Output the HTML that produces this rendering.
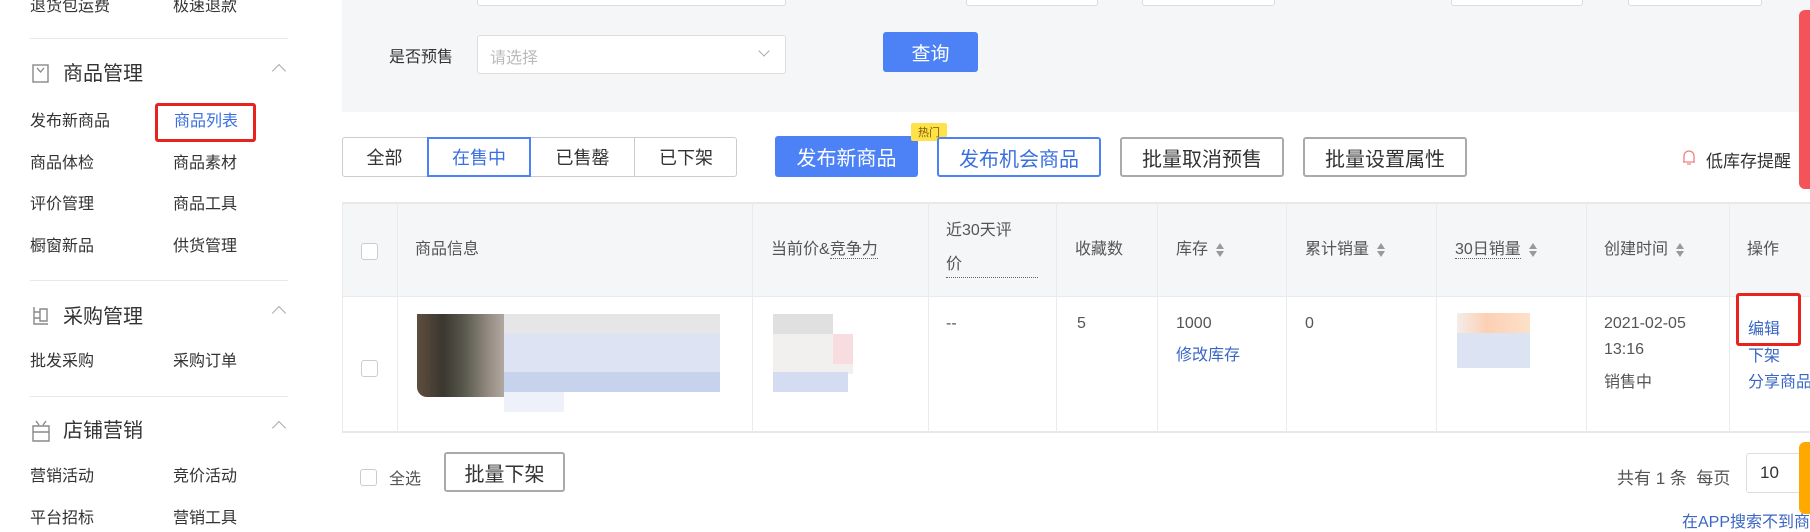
<!DOCTYPE html>
<html><head><meta charset="utf-8"><style>
*{margin:0;padding:0;box-sizing:border-box}
body{width:1810px;height:524px;overflow:hidden;background:#fff;position:relative;font-family:"Liberation Sans","Noto Sans CJK SC",sans-serif;color:#333;font-size:16px}
.a{position:absolute;white-space:nowrap}
.side{color:#333;font-size:16px;line-height:20px}
.hd{font-size:20px;line-height:24px;color:#333}
.dv{position:absolute;left:30px;width:258px;height:1px;background:#e8e8e8}
.caret{position:absolute;width:10px;height:10px;border-left:1.5px solid #aaa;border-top:1.5px solid #aaa;transform:rotate(45deg)}
.btn{position:absolute;border:1px solid #aaa;border-radius:3px;font-size:18px;display:flex;align-items:center;justify-content:center;color:#333;background:#fff}
.vl{position:absolute;top:202px;height:230px;width:1px;background:#ebebeb}
.th{position:absolute;color:#555;font-size:16px;line-height:20px;white-space:nowrap}
.sort{display:inline-block;vertical-align:middle;margin-left:8px;width:8px;height:16px;position:relative}
.sort:before{content:"";position:absolute;left:0;top:1px;border:4px solid transparent;border-bottom:6px solid #999;border-top:0}
.sort:after{content:"";position:absolute;left:0;bottom:1px;border:4px solid transparent;border-top:6px solid #999;border-bottom:0}
.cb{position:absolute;width:17px;height:17px;border:1px solid #ccc;border-radius:3px;background:#fff}
.blue{color:#3a66c4}
</style></head><body>
<div class="a side" style="left:30px;top:-3px">退货包运费</div>
<div class="a side" style="left:173px;top:-3px">极速退款</div>
<div class="dv" style="top:38px"></div>
<svg class="a" style="left:32px;top:64px" width="18" height="20" viewBox="0 0 18 20"><rect x="1" y="1" width="15" height="17" fill="none" stroke="#888" stroke-width="1.4"/><path d="M5 4l3.5 4 3.5-4" fill="none" stroke="#888" stroke-width="1.3"/></svg>
<div class="a hd" style="left:63px;top:62px">商品管理</div>
<div class="caret" style="left:274px;top:66px"></div>
<div class="a side" style="left:30px;top:112px">发布新商品</div>
<div class="a side" style="left:174px;top:112px;color:#3a6fe0">商品列表</div>
<div class="a" style="left:155px;top:103px;width:101px;height:39px;border:3px solid #e8221f;border-radius:3px"></div>
<div class="a side" style="left:30px;top:154px">商品体检</div><div class="a side" style="left:173px;top:154px">商品素材</div>
<div class="a side" style="left:30px;top:195px">评价管理</div><div class="a side" style="left:173px;top:195px">商品工具</div>
<div class="a side" style="left:30px;top:237px">橱窗新品</div><div class="a side" style="left:173px;top:237px">供货管理</div>
<div class="dv" style="top:280px"></div>
<svg class="a" style="left:32px;top:306px" width="18" height="20" viewBox="0 0 18 20"><path d="M2 1v17h14M2 6h6M2 12h6M8 3h7v12H8z" fill="none" stroke="#888" stroke-width="1.4"/></svg>
<div class="a hd" style="left:63px;top:305px">采购管理</div>
<div class="caret" style="left:274px;top:308px"></div>
<div class="a side" style="left:30px;top:352px">批发采购</div><div class="a side" style="left:173px;top:352px">采购订单</div>
<div class="dv" style="top:396px"></div>
<svg class="a" style="left:31px;top:420px" width="20" height="22" viewBox="0 0 20 22"><path d="M5 1l3 4M15 1l-3 4M2 6h16v15H2zM2 12h16" fill="none" stroke="#888" stroke-width="1.4"/></svg>
<div class="a hd" style="left:63px;top:419px">店铺营销</div>
<div class="caret" style="left:274px;top:423px"></div>
<div class="a side" style="left:30px;top:467px">营销活动</div><div class="a side" style="left:173px;top:467px">竞价活动</div>
<div class="a side" style="left:30px;top:509px">平台招标</div><div class="a side" style="left:173px;top:509px">营销工具</div>

<div class="a" style="left:342px;top:0;width:1468px;height:112px;background:#f5f6f8"></div>
<div class="a" style="left:477px;top:-10px;width:309px;height:16px;border:1px solid #ddd;border-radius:3px;background:#fff"></div>
<div class="a" style="left:966px;top:-10px;width:132px;height:16px;border:1px solid #ddd;border-radius:3px;background:#fff"></div>
<div class="a" style="left:1142px;top:-10px;width:133px;height:16px;border:1px solid #ddd;border-radius:3px;background:#fff"></div>
<div class="a" style="left:1451px;top:-10px;width:132px;height:16px;border:1px solid #ddd;border-radius:3px;background:#fff"></div>
<div class="a" style="left:1628px;top:-10px;width:134px;height:16px;border:1px solid #ddd;border-radius:3px;background:#fff"></div>
<div class="a" style="left:389px;top:43px;color:#333">是否预售</div>
<div class="a" style="left:477px;top:35px;width:309px;height:39px;border:1px solid #ddd;border-radius:3px;background:#fff"></div>
<div class="a" style="left:490px;top:44px;color:#bbb">请选择</div>
<div class="a" style="left:760px;top:47px;width:8px;height:8px;border-right:1.3px solid #aaa;border-bottom:1.3px solid #aaa;transform:rotate(45deg)"></div>
<div class="a" style="left:883px;top:32px;width:95px;height:40px;background:#4d82f7;border-radius:3px;color:#fff;font-size:19px;display:flex;align-items:center;justify-content:center">查询</div>
<div class="a" style="left:1799px;top:10px;width:11px;height:179px;background:#f5535a;border-radius:6px 0 0 6px"></div>

<div class="a" style="left:342px;top:137px;width:395px;height:40px;border:1px solid #ccc;border-radius:3px"></div>
<div class="a" style="left:342px;top:137px;width:85px;height:40px;display:flex;align-items:center;justify-content:center;font-size:18px">全部</div>
<div class="a" style="left:427px;top:137px;width:104px;height:40px;border:2px solid #4d82f7;display:flex;align-items:center;justify-content:center;font-size:18px;color:#3a6fe0;background:#fff">在售中</div>
<div class="a" style="left:531px;top:137px;width:104px;height:40px;border-right:1px solid #ccc;display:flex;align-items:center;justify-content:center;font-size:18px">已售罄</div>
<div class="a" style="left:635px;top:137px;width:102px;height:40px;display:flex;align-items:center;justify-content:center;font-size:18px">已下架</div>
<div class="a" style="left:775px;top:136px;width:143px;height:41px;background:#4d82f7;border-radius:3px;color:#fff;font-size:20px;display:flex;align-items:center;justify-content:center">发布新商品</div>
<div class="a" style="left:911px;top:123px;width:36px;height:18px;background:#ffe14a;border-radius:2px;font-size:11px;color:#7a5b00;display:flex;align-items:center;justify-content:center">热门</div>
<div class="btn" style="left:937px;top:137px;width:164px;height:40px;border:2px solid #4d82f7;color:#3a6fe0;font-size:20px">发布机会商品</div>
<div class="btn" style="left:1120px;top:137px;width:164px;height:40px;border-width:2px;font-size:20px">批量取消预售</div>
<div class="btn" style="left:1303px;top:137px;width:164px;height:40px;border-width:2px;font-size:20px">批量设置属性</div>
<svg class="a" style="left:1682px;top:148px" width="14" height="18" viewBox="0 0 14 18"><path d="M2 14V8a5 5 0 0 1 10 0v6H2zM1 14h12M5 16h4" fill="none" stroke="#f08080" stroke-width="1.3"/></svg>
<div class="a" style="left:1706px;top:147px;font-size:17px">低库存提醒</div>

<div class="a" style="left:342px;top:202px;width:1468px;height:95px;background:#f5f6f8;border-top:2px solid #e8e8e8;border-bottom:1px solid #ebebeb"></div>
<div class="a" style="left:342px;top:202px;width:1px;height:230px;background:#ebebeb"></div>
<div class="a" style="left:342px;top:431px;width:1468px;height:2px;background:#e8e8e8"></div>
<div class="vl" style="left:397px"></div><div class="vl" style="left:752px"></div><div class="vl" style="left:928px"></div><div class="vl" style="left:1056px"></div><div class="vl" style="left:1157px"></div><div class="vl" style="left:1286px"></div><div class="vl" style="left:1436px"></div><div class="vl" style="left:1586px"></div><div class="vl" style="left:1729px"></div>
<div class="cb" style="left:361px;top:243px"></div>
<div class="th" style="left:415px;top:240px">商品信息</div>
<div class="th" style="left:771px;top:240px">当前价&amp;<span style="border-bottom:1px dotted #666">竞争力</span></div>
<div class="th" style="left:946px;top:221px">近30天评</div>
<div class="th" style="left:946px;top:255px;width:92px;border-bottom:1px dotted #666;padding-bottom:2px">价</div>
<div class="th" style="left:1075px;top:240px">收藏数</div>
<div class="th" style="left:1176px;top:240px">库存<span class="sort"></span></div>
<div class="th" style="left:1305px;top:240px">累计销量<span class="sort"></span></div>
<div class="th" style="left:1455px;top:240px"><span style="border-bottom:1px dotted #666">30日销量</span><span class="sort"></span></div>
<div class="th" style="left:1604px;top:240px">创建时间<span class="sort"></span></div>
<div class="th" style="left:1747px;top:240px">操作</div>

<div class="cb" style="left:361px;top:360px"></div>
<div class="a" style="left:417px;top:314px;width:87px;height:83px;background:linear-gradient(90deg,#5e4e3e 0,#3a372f 30%,#5a5a4e 55%,#9a9088 85%,#b0a89e 100%);border-radius:0 0 0 10px"></div>
<div class="a" style="left:504px;top:314px;width:216px;height:20px;background:#e6e6e8"></div>
<div class="a" style="left:504px;top:334px;width:216px;height:40px;background:#dde3f3"></div>
<div class="a" style="left:504px;top:372px;width:216px;height:20px;background:#c7d2ec"></div>
<div class="a" style="left:504px;top:392px;width:60px;height:20px;background:#eef1f9"></div>
<div class="a" style="left:773px;top:314px;width:60px;height:20px;background:#e0e0e0"></div>
<div class="a" style="left:773px;top:334px;width:80px;height:40px;background:#f1f0ef"></div>
<div class="a" style="left:833px;top:334px;width:20px;height:30px;background:#f8dde0"></div>
<div class="a" style="left:773px;top:372px;width:75px;height:20px;background:#d3dcf0"></div>
<div class="a" style="left:946px;top:315px;color:#555">--</div>
<div class="a" style="left:1077px;top:315px;color:#555">5</div>
<div class="a" style="left:1176px;top:315px;color:#555">1000</div>
<div class="a blue" style="left:1176px;top:341px">修改库存</div>
<div class="a" style="left:1305px;top:315px;color:#555">0</div>
<div class="a" style="left:1457px;top:313px;width:73px;height:20px;background:linear-gradient(90deg,#f3ede9,#fcd0b4 40%,#fde0c9)"></div>
<div class="a" style="left:1457px;top:333px;width:73px;height:35px;background:#dce3f3"></div>
<div class="a" style="left:1604px;top:315px;color:#555">2021-02-05</div>
<div class="a" style="left:1604px;top:341px;color:#555">13:16</div>
<div class="a" style="left:1604px;top:368px;color:#555">销售中</div>
<div class="a blue" style="left:1748px;top:342px">下架</div>
<div class="a blue" style="left:1748px;top:368px">分享商品</div>
<div class="a" style="left:1736px;top:293px;width:65px;height:53px;border:3px solid #e8221f;border-radius:3px;background:#fff"></div>
<div class="a blue" style="left:1748px;top:315px">编辑</div>

<div class="cb" style="left:360px;top:469px"></div>
<div class="a" style="left:389px;top:465px;color:#555">全选</div>
<div class="btn" style="left:444px;top:452px;width:121px;height:40px;border-width:2px;font-size:20px">批量下架</div>
<div class="a" style="left:1617px;top:464px;color:#555;font-size:17px">共有 1 条&nbsp; 每页</div>
<div class="a" style="left:1746px;top:453px;width:70px;height:40px;border:1px solid #ddd;border-radius:3px;padding:9px 0 0 13px;font-size:17px">10</div>
<div class="a" style="left:1799px;top:442px;width:11px;height:72px;background:#ffa800;border-radius:6px 0 0 6px"></div>
<div class="a" style="left:1682px;top:508px;color:#3a66c4;font-size:16px">在APP搜索不到商品</div>
</body></html>
